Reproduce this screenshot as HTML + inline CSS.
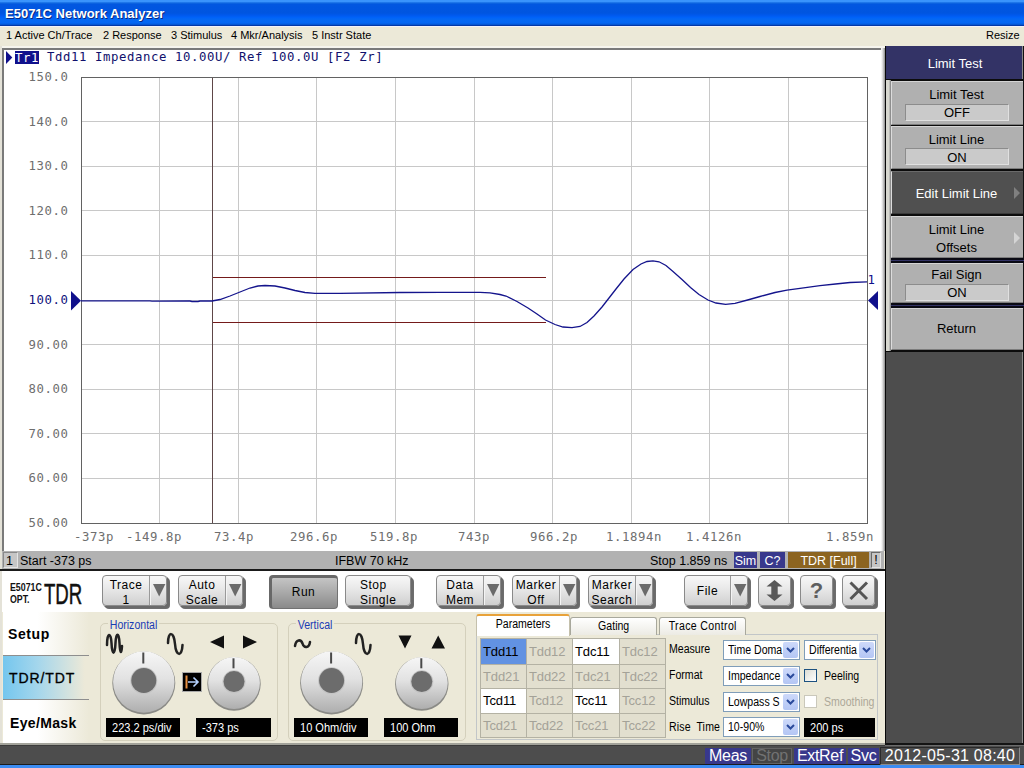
<!DOCTYPE html>
<html>
<head>
<meta charset="utf-8">
<title>E5071C Network Analyzer</title>
<style>
*{box-sizing:border-box;margin:0;padding:0}
html,body{width:1024px;height:768px;overflow:hidden;background:#ece9d8;font-family:"Liberation Sans",sans-serif;}
.abs{position:absolute}
#titlebar{left:0;top:0;width:1024px;height:27px;background:linear-gradient(#3a94fc 0px,#3a94fc 1.5px,#1068e0 3px,#0257e0 4.5px,#0055e0 13px,#0058ec 15px,#0062f8 17.5px,#0468f4 19px,#0466f2 23px,#0456d4 24.5px,#0238a8 25.5px,#0238a8 26px,#f2f2fa 26px,#f2f2fa 27px)}
#titlebar span{position:absolute;left:5px;top:6px;color:#fff;font-weight:bold;font-size:13px;text-shadow:1px 1px 0 #0a2a80;white-space:nowrap}
#menubar{left:0;top:27px;width:1024px;height:18px;background:#ece9d8;font-size:11px;color:#000}
#menubar span{position:absolute;top:2px;white-space:nowrap}
#chartframe{left:2px;top:48px;width:882px;height:503px;background:#fff;border-left:2px solid #7a7a7a;border-top:2px solid #7a7a7a}
.mono{font-family:"DejaVu Sans Mono","Liberation Mono",monospace;white-space:nowrap}
.yl{left:20px;width:48.6px;text-align:right;font-size:12.3px;letter-spacing:0.6px;color:#6e6e6e;line-height:16px}
.xl{top:529px;font-size:12.3px;letter-spacing:0.6px;color:#6e6e6e;line-height:16px}

#chstat{left:2px;top:551px;width:882px;height:18px;background:#b2b2b2;font-size:12.5px;color:#000;border-bottom:0}
#chstat span{position:absolute;top:0;line-height:20px;height:18px;white-space:nowrap}
#chstat .bx{top:1px;height:16px;line-height:18px;overflow:hidden;text-align:center;color:#fff}
#chline{left:0;top:569px;width:886px;height:2px;background:#1a1a1a}


#tb{left:2px;top:571px;width:883px;height:41px;background:#fff}
#bp{left:2px;top:612px;width:883px;height:131px;background:#ece9d8}
.ui{font-family:"Liberation Sans",sans-serif}
.btn{top:575px;height:31px;border:1px solid #8a8a8a;border-radius:4px;background:linear-gradient(#f8f8f8,#e8e8e8 45%,#cfcfcf);box-shadow:1px 1px 0 #6a6a6a,2px 2px 0 #6a6a6a,3px 3px 0 #6e6e6e;font-size:12px;color:#000;text-align:center;line-height:15px;letter-spacing:0.5px}
.btn .t{position:absolute;left:0;top:2px;white-space:nowrap}
.btn .dv{position:absolute;top:0;width:1px;height:29px;background:#9a9a9a;box-shadow:1px 0 0 #f4f4f4}
.btn svg{position:absolute;top:8px}
.pressed{height:34px;width:69px;background:linear-gradient(#c4c4c4,#a8a8a8 50%,#8a8a8a);border:1px solid #6a6a6a;border-width:3px 1px 1px 3px;border-color:#686868 #727272 #727272 #686868;box-shadow:none}

#ltab{left:3px;top:612px;width:86px;height:131px;background:linear-gradient(90deg,#fff 0%,#fff 40%,#ece9d8 100%)}
#ltabsel{left:3px;top:656px;width:86px;height:43px;background:linear-gradient(90deg,#74c6ee 0%,#a4d6ec 40%,#ece9d8 95%)}
.lt{left:9px;font-size:14px;font-weight:bold;color:#000;line-height:16px;white-space:nowrap}
.gb{border:1px solid #d4d0bc;border-radius:5px}
.gbl{top:617.5px;font-size:12px;line-height:14px;color:#1a3cb4;background:#ece9d8;padding:0 2px;white-space:nowrap;transform:scaleX(.88);transform-origin:0 50%}
.vb{top:718px;height:19px;background:#000;color:#fff;font-size:12px;line-height:21px;padding-left:6px;white-space:nowrap;overflow:hidden}
.vb .nx{transform:scaleX(.92)}
.tab{font-size:12px;text-align:center;color:#000;white-space:nowrap}
.pc{width:46px;height:24px;font-size:13px;letter-spacing:-0.1px;line-height:24px;padding-left:2px;color:#a4a298;background:#e2dfcf;white-space:nowrap}
.pc.w{background:#fff;color:#000}
.pc.s{background:#6292e2;color:#000}
.lb{left:669px;font-size:12px;line-height:14px;color:#000;white-space:nowrap}
.cb{height:20px;background:#fff;border:1px solid #7f9db9;font-size:12px;line-height:19.5px;padding-left:4px;white-space:nowrap;overflow:hidden;color:#000}
.cb i{position:absolute;right:1px;top:1px;width:15px;height:16px;background:linear-gradient(#cdd9fa,#b4c6f4);border-radius:2px}
.cb i svg{position:absolute;left:3px;top:5px}
.nx{display:inline-block;transform:scaleX(.88);transform-origin:0 50%}
.nc{display:inline-block;transform:scaleX(.88);transform-origin:50% 50%}
.ck{left:804px;width:13px;height:13px;border:1px solid #1c5180;background:linear-gradient(135deg,#dcdcd4,#fff)}
#sidebar{left:885px;top:46px;width:139px;height:697px;background:#4d4d4d;border-left:1px solid #080808;border-right:1px solid #111;box-shadow:inset -1px 0 0 #8a8a8a}
#sbhead{left:886px;top:46px;width:136px;height:33px;background:#333366;color:#fff;font-size:13px;text-align:center;line-height:35px;padding-left:2px}
#grip{left:886px;top:80px;width:5px;height:271px;background:linear-gradient(90deg,#d8d8d0 0,#d8d8d0 3px,#a0a0a0 4px,#7c7c7c 5px)}
.sb{left:891px;width:132px;background:#b0b0b0;color:#000;font-size:13px;text-align:center;border-left:1px solid #dcdcdc;border-top:1px solid #d4d4d4;border-bottom:1px solid #7c7c7c;}
.sb div{position:absolute;left:-1px;width:131px;line-height:16px;white-space:nowrap}
.sb .v{left:13px;width:104px;height:17px;background:#cacaca;border:1px solid;border-color:#8c8c8c #e0e0e0 #e0e0e0 #8c8c8c;line-height:16px}
.sep{left:891px;width:133px;height:5px;background:#333366;border-top:2px solid #0a0a14;border-bottom:2px solid #0a0a14}
#statusbar{left:0;top:743px;width:1024px;height:22px;background:#4d4d4d;border-top:2px solid #a2a29a;border-bottom:1px solid #1c1c1c;box-shadow:inset 0 1px 0 #3c3c3c}
.st{top:748px;height:16px;font-size:16px;line-height:16px;color:#fff;text-align:center;white-space:nowrap;background:#38388c;letter-spacing:-0.3px}
#bottomblue{left:0;top:765px;width:1024px;height:3px;background:#3c8cf2}
</style>
</head>
<body>
<div id="titlebar" class="abs"><span>E5071C Network Analyzer</span></div>
<div id="menubar" class="abs">
<span style="left:6px">1 Active Ch/Trace</span>
<span style="left:103px">2 Response</span>
<span style="left:171px">3 Stimulus</span>
<span style="left:231px">4 Mkr/Analysis</span>
<span style="left:312px">5 Instr State</span>
<span style="left:986px">Resize</span>
</div>
<div class="abs" style="left:0;top:46px;width:885px;height:2px;background:#f6f5ee"></div>
<div class="abs" style="left:0;top:46px;width:2px;height:697px;background:#e4e2d8"></div>
<div id="chartframe" class="abs"></div>
<svg class="abs" style="left:0;top:0" width="1024" height="768" viewBox="0 0 1024 768" shape-rendering="crispEdges">
<path d="M159.5 77.5V523.5M81.5 121.5H867.5M238.5 77.5V523.5M81.5 166.5H867.5M316.5 77.5V523.5M81.5 210.5H867.5M395.5 77.5V523.5M81.5 255.5H867.5M474.5 77.5V523.5M81.5 300.5H867.5M552.5 77.5V523.5M81.5 344.5H867.5M631.5 77.5V523.5M81.5 389.5H867.5M709.5 77.5V523.5M81.5 433.5H867.5M788.5 77.5V523.5M81.5 478.5H867.5" stroke="#c8c8c8" stroke-width="1" fill="none"/>
<rect x="81.5" y="77.5" width="786.0" height="446.0" fill="none" stroke="#626262" stroke-width="1"/>
<path d="M212.5 78V523" stroke="#5e4648" stroke-width="1" fill="none"/><path d="M213 277.5H546M213 322.5H546" stroke="#741a1a" stroke-width="1" fill="none"/>
<path d="M81 300.9 L150 300.9 L152 301.2 L190 301 L192 301.5 L198 301.5 L200 301 L212 301 L220 299.5 L230 296 L240 292 L250 288 L258 286 L265 285.5 L275 286 L285 288 L295 290.5 L305 292.5 L315 293.3 L340 293.3 L400 292.5 L440 292.4 L480 292.4 L490 292.8 L500 294.5 L506 296 L517 301.5 L528 308 L537 314 L545.5 320 L555 324.5 L563 327 L572 327.7 L580 326.5 L587 322.5 L594 316 L602 307 L609 298 L616 289 L624 279 L633 269.5 L641 264 L647 261.5 L653 260.8 L659 261.8 L666 265.5 L673 271.5 L682 279.5 L690.5 287.5 L699 294.5 L708 300 L716 303 L725.6 304.3 L735 303.3 L747.6 300 L760 296.5 L775 292.5 L787 290.2 L800 288.3 L820 285.7 L835.5 284 L850 282.5 L867 281.8" stroke="#14148c" stroke-width="1.3" fill="none" shape-rendering="auto"/>
<path d="M71 291L81 300.7L71 310.4Z" fill="#10108c" shape-rendering="auto"/>
<path d="M878 291L868 300.5L878 310Z" fill="#10108c" shape-rendering="auto"/>
<path d="M6 51L12.3 57.5L6 64Z" fill="#10108c" shape-rendering="auto"/>
</svg>
<div class="abs mono yl" style="top:69px">150.0</div>
<div class="abs mono yl" style="top:114px">140.0</div>
<div class="abs mono yl" style="top:158px">130.0</div>
<div class="abs mono yl" style="top:203px">120.0</div>
<div class="abs mono yl" style="top:247px">110.0</div>
<div class="abs mono yl" style="top:292px;color:#10107c">100.0</div>
<div class="abs mono yl" style="top:337px">90.00</div>
<div class="abs mono yl" style="top:381px">80.00</div>
<div class="abs mono yl" style="top:426px">70.00</div>
<div class="abs mono yl" style="top:470px">60.00</div>
<div class="abs mono yl" style="top:515px">50.00</div>
<div class="abs mono xl" style="left:74px">-373p</div>
<div class="abs mono xl" style="left:126px">-149.8p</div>
<div class="abs mono xl" style="left:214px">73.4p</div>
<div class="abs mono xl" style="left:290px">296.6p</div>
<div class="abs mono xl" style="left:370px">519.8p</div>
<div class="abs mono xl" style="left:458px">743p</div>
<div class="abs mono xl" style="left:530px">966.2p</div>
<div class="abs mono xl" style="left:606px">1.1894n</div>
<div class="abs mono xl" style="left:686px">1.4126n</div>
<div class="abs mono xl" style="left:826px">1.859n</div>
<div class="abs mono" style="left:15px;top:51px;width:24px;height:13px;font-size:12.3px;letter-spacing:0.6px;color:#fff;background:#10108c;line-height:14px;overflow:hidden">Tr1</div>
<div class="abs mono" style="left:47px;top:49px;font-size:12.3px;letter-spacing:0.6px;color:#10106c;line-height:16px">Tdd11 Impedance 10.00U/ Ref 100.0U [F2 Zr]</div>
<div class="abs mono" style="left:867.6px;top:272px;font-size:12.3px;letter-spacing:0.6px;color:#10108c;line-height:16px">1</div>
<div id="chstat" class="abs">
<span style="left:1px;top:1px;width:15px;height:16px;line-height:16px;padding-right:2px;background:#c6c6c6;border:1px solid;border-color:#8a8a8a #e4e4e4 #e4e4e4 #8a8a8a;text-align:center">1</span>
<span style="left:18px">Start -373 ps</span>
<span style="left:333px">IFBW 70 kHz</span>
<span style="left:648px">Stop 1.859 ns</span>
<span class="bx" style="left:732px;width:23px;background:#38388c">Sim</span>
<span class="bx" style="left:758px;width:25px;background:#38388c">C?</span>
<span class="bx" style="left:786px;width:81px;background:#8c6420">TDR [Full]</span>
<span class="bx" style="left:869px;width:10px;background:#c6c6c6;color:#000;border:1px solid;border-color:#6a6a6a #e4e4e4 #e4e4e4 #6a6a6a;line-height:15px">!</span>
</div>
<div id="chline" class="abs"></div>
<div id="sidebar" class="abs"></div>
<div class="abs" style="left:881px;top:48px;width:4px;height:503px;background:linear-gradient(90deg,#fff,#d8d8d8 45%,#8c8c8c)"></div>
<div class="abs" style="left:886px;top:79px;width:137px;height:273px;background:#0c0c0c"></div>
<div id="sbhead" class="abs">Limit Test</div>
<div id="grip" class="abs"></div>
<div class="abs sb" style="top:81px;height:44px"><div style="top:5px">Limit Test</div><div class="v" style="top:22px">OFF</div></div>
<div class="abs sb" style="top:126px;height:43px"><div style="top:5px">Limit Line</div><div class="v" style="top:21px;line-height:18px">ON</div></div>
<div class="abs sb" style="top:171px;height:43px;background:#505050;color:#fff;border-top-color:#6a6a6a;border-bottom-color:#3a3a3a"><div style="top:14px">Edit Limit Line</div><svg class="abs" style="left:122px;top:15px" width="7" height="13"><path d="M0 0L6 6L0 12Z" fill="#808080"/></svg></div>
<div class="abs sb" style="top:216px;height:42px"><div style="top:5px">Limit Line</div><div style="top:23px">Offsets</div><svg class="abs" style="left:122px;top:15px" width="7" height="13"><path d="M0 0L6 6L0 12Z" fill="#d4d4d4"/></svg></div>
<div class="abs sep" style="top:258px"></div>
<div class="abs sb" style="top:263px;height:40px;box-shadow:none"><div style="top:3px">Fail Sign</div><div class="v" style="top:20px">ON</div></div>
<div class="abs sep" style="top:303px"></div>
<div class="abs sb" style="top:308px;height:42px"><div style="top:12px">Return</div></div>
<div id="statusbar" class="abs"></div>
<div id="bottomblue" class="abs"></div>
<div class="abs" style="left:885px;top:743px;width:139px;height:3px;background:linear-gradient(#141414 0,#141414 2px,#6c6c6c 2px,#6c6c6c 3px)"></div>
<div id="tb" class="abs"></div>
<div id="bp" class="abs"></div>
<div class="abs" style="left:10px;top:581px;font-size:11px;font-weight:bold;line-height:12px;transform:scaleX(0.8);transform-origin:0 0;white-space:nowrap;color:#111">E5071C<br>OPT.</div>
<div class="abs" style="left:44px;top:577.5px;font-size:30px;line-height:32px;-webkit-text-stroke:0.5px #111;transform:scaleX(0.62);transform-origin:0 0;white-space:nowrap;color:#111">TDR</div>
<div class="abs btn" style="left:102px;width:65px"><div class="t" style="width:46px;top:2px">Trace<br>1</div><div class="dv" style="left:46px"></div><svg style="left:50px" width="14" height="14"><path d="M0 0H12.4L6.2 12.6Z" fill="#6a6a6a"/></svg></div>
<div class="abs btn" style="left:178px;width:65px"><div class="t" style="width:46px;top:2px">Auto<br>Scale</div><div class="dv" style="left:46px"></div><svg style="left:50px" width="14" height="14"><path d="M0 0H12.4L6.2 12.6Z" fill="#6a6a6a"/></svg></div>
<div class="abs btn pressed" style="left:269px;width:69px"><div class="t" style="width:63px;top:7px">Run</div></div>
<div class="abs btn " style="left:345px;width:66px"><div class="t" style="width:66px;top:2px;text-align:left;padding-left:14px">Stop<br>Single</div></div>
<div class="abs btn" style="left:436px;width:65px"><div class="t" style="width:46px;top:2px">Data<br>Mem</div><div class="dv" style="left:46px"></div><svg style="left:50px" width="14" height="14"><path d="M0 0H12.4L6.2 12.6Z" fill="#6a6a6a"/></svg></div>
<div class="abs btn" style="left:512px;width:65px"><div class="t" style="width:46px;top:2px">Marker<br>Off</div><div class="dv" style="left:46px"></div><svg style="left:50px" width="14" height="14"><path d="M0 0H12.4L6.2 12.6Z" fill="#6a6a6a"/></svg></div>
<div class="abs btn" style="left:588px;width:65px"><div class="t" style="width:46px;top:2px">Marker<br>Search</div><div class="dv" style="left:46px"></div><svg style="left:50px" width="14" height="14"><path d="M0 0H12.4L6.2 12.6Z" fill="#6a6a6a"/></svg></div>
<div class="abs btn" style="left:684px;width:64px"><div class="t" style="width:45px;top:8px">File</div><div class="dv" style="left:45px"></div><svg style="left:49px" width="14" height="14"><path d="M0 0H12.4L6.2 12.6Z" fill="#6a6a6a"/></svg></div>
<div class="abs btn" style="left:758px;width:33px"><svg style="left:7px;top:4px" width="18" height="22"><path d="M8.5 0L16.5 6.5H11.7V14.5H16.5L8.5 21L0.5 14.5H5.3V6.5H0.5Z" fill="#585858"/></svg></div>
<div class="abs btn" style="left:800px;width:33px"><div class="t" style="width:31px;top:3px;font-size:22px;font-weight:bold;line-height:24px;color:#5e5e5e;letter-spacing:0">?</div></div>
<div class="abs btn" style="left:842px;width:33px"><svg style="left:6px;top:5px" width="20" height="20"><path d="M1.5 1.5L18 18M18 1.5L1.5 18" stroke="#555" stroke-width="3" fill="none"/></svg></div>
<div id="ltab" class="abs"></div><div id="ltabsel" class="abs"></div>
<div class="abs" style="left:3px;top:655px;width:86px;height:1px;background:#8e8e8e"></div>
<div class="abs" style="left:3px;top:699px;width:86px;height:1px;background:#8e8e8e"></div>
<div class="abs lt" style="top:626px;left:8px;letter-spacing:0.6px">Setup</div>
<div class="abs lt" style="top:670px;font-weight:normal;letter-spacing:0.9px;-webkit-text-stroke:0.3px #000">TDR/TDT</div>
<div class="abs lt" style="top:715px;left:10px;letter-spacing:0.35px">Eye/Mask</div>
<div class="abs gb" style="left:100px;top:623px;width:178px;height:118px"></div>
<div class="abs gbl" style="left:108px">Horizontal</div>
<div class="abs gb" style="left:288px;top:623px;width:178px;height:118px"></div>
<div class="abs gbl" style="left:296px">Vertical</div>
<svg class="abs" style="left:0;top:612px" width="886" height="131" viewBox="0 612 886 131"><defs><linearGradient id="kg" x1="0" y1="0" x2="0" y2="1"><stop offset="0" stop-color="#f6f6f6"/><stop offset="0.45" stop-color="#e2e2e2"/><stop offset="1" stop-color="#aeaeae"/></linearGradient></defs><circle cx="143.8" cy="683" r="31.5" fill="#8a8a86"/><circle cx="143.8" cy="682" r="30.7" fill="url(#kg)"/><circle cx="143.8" cy="680.8" r="13.5" fill="#c4c4c4"/><circle cx="143.8" cy="680.5" r="12.5" fill="#6c6c6c"/><rect x="142.3" y="652.5" width="2" height="11" fill="#4a4a4a"/><circle cx="234" cy="684" r="26.7" fill="#8a8a86"/><circle cx="234" cy="683" r="25.9" fill="url(#kg)"/><circle cx="234" cy="681.8" r="11.5" fill="#c4c4c4"/><circle cx="234" cy="681.5" r="10.5" fill="#6c6c6c"/><rect x="232.5" y="658.3" width="2" height="10" fill="#4a4a4a"/><circle cx="331.6" cy="683" r="31.5" fill="#8a8a86"/><circle cx="331.6" cy="682" r="30.7" fill="url(#kg)"/><circle cx="331.6" cy="680.8" r="13.5" fill="#c4c4c4"/><circle cx="331.6" cy="680.5" r="12.5" fill="#6c6c6c"/><rect x="330.1" y="652.5" width="2" height="11" fill="#4a4a4a"/><circle cx="421.8" cy="684" r="26.7" fill="#8a8a86"/><circle cx="421.8" cy="683" r="25.9" fill="url(#kg)"/><circle cx="421.8" cy="681.8" r="11.5" fill="#c4c4c4"/><circle cx="421.8" cy="681.5" r="10.5" fill="#6c6c6c"/><rect x="420.3" y="658.3" width="2" height="10" fill="#4a4a4a"/><path d="M107 645C107 632 111 632 111.5 643C112 656 115 656 115.5 643C116 632 119 632 119.5 643C120 655 121.5 654 122 646" stroke="#222" stroke-width="2.5" fill="none" stroke-linecap="round"/><path d="M168 643C168 631 174 631 175 644C176 657 182 657 182.5 645" stroke="#222" stroke-width="2.5" fill="none" stroke-linecap="round"/><path d="M210 642L224 635.5V648.5Z M257 642L243 635.5V648.5Z" fill="#111"/><path d="M295 646C296 639 301 639 302.5 643.5C304 648.5 309 648.5 310 642" stroke="#222" stroke-width="2.5" fill="none" stroke-linecap="round"/><path d="M356 643C356 631 362 631 363 644C364 657 370 657 370.5 645" stroke="#222" stroke-width="2.5" fill="none" stroke-linecap="round"/><path d="M398.5 635.5H411.5L405 648.5Z M431.5 648.5H445L438.2 635.5Z" fill="#111"/><rect x="182.5" y="672.5" width="19" height="19" fill="#000" stroke="#a8a8a8"/><path d="M186.5 675.5V688.5" stroke="#e89040" stroke-width="2"/><path d="M188 682H197.5M193.5 677.5L198 682L193.5 686.5" stroke="#b4d0fc" stroke-width="1.6" fill="none"/></svg>
<div class="abs vb" style="left:106px;width:74px"><span class="nx">223.2 ps/div</span></div>
<div class="abs vb" style="left:196px;width:75px"><span class="nx">-373 ps</span></div>
<div class="abs vb" style="left:294px;width:74px"><span class="nx">10 Ohm/div</span></div>
<div class="abs vb" style="left:384px;width:74px"><span class="nx">100 Ohm</span></div>
<div class="abs" style="left:476px;top:634px;width:402px;height:106px;border:1px solid #c2c6c8;background:#ece9d8"></div>
<div class="abs tab" style="left:476px;top:614px;width:94px;height:22px;background:#fff;border:1px solid #c4c0ac;border-bottom:0;border-top:2px solid #e8a23a;border-radius:3px 3px 0 0;line-height:17px"><span class="nc">Parameters</span></div>
<div class="abs tab" style="left:570px;top:617px;width:87px;height:18px;background:linear-gradient(#fff,#ecebe4);border:1px solid #a8a89c;border-bottom:0;border-radius:3px 3px 0 0;line-height:17px"><span class="nc">Gating</span></div>
<div class="abs tab" style="left:659px;top:617px;width:87px;height:18px;background:linear-gradient(#fff,#ecebe4);border:1px solid #a8a89c;border-bottom:0;border-radius:3px 3px 0 0;line-height:17px"><span class="nc" style="letter-spacing:0.4px">Trace Control</span></div>
<div class="abs" style="left:480px;top:638px;width:186px;height:100px;background:#b4b2a4"></div>
<div class="abs pc s" style="left:481px;top:639px;width:45px;height:25px;line-height:25px">Tdd11</div>
<div class="abs pc" style="left:527px;top:639px;width:45px;height:25px;line-height:25px">Tdd12</div>
<div class="abs pc w" style="left:573px;top:639px;width:46px;height:25px;line-height:25px">Tdc11</div>
<div class="abs pc" style="left:620px;top:639px;width:45px;height:25px;line-height:25px">Tdc12</div>
<div class="abs pc" style="left:481px;top:665px;width:45px;height:23px;line-height:23px">Tdd21</div>
<div class="abs pc" style="left:527px;top:665px;width:45px;height:23px;line-height:23px">Tdd22</div>
<div class="abs pc" style="left:573px;top:665px;width:46px;height:23px;line-height:23px">Tdc21</div>
<div class="abs pc" style="left:620px;top:665px;width:45px;height:23px;line-height:23px">Tdc22</div>
<div class="abs pc w" style="left:481px;top:689px;width:45px;height:24px;line-height:24px">Tcd11</div>
<div class="abs pc" style="left:527px;top:689px;width:45px;height:24px;line-height:24px">Tcd12</div>
<div class="abs pc w" style="left:573px;top:689px;width:46px;height:24px;line-height:24px">Tcc11</div>
<div class="abs pc" style="left:620px;top:689px;width:45px;height:24px;line-height:24px">Tcc12</div>
<div class="abs pc" style="left:481px;top:714px;width:45px;height:23px;line-height:23px">Tcd21</div>
<div class="abs pc" style="left:527px;top:714px;width:45px;height:23px;line-height:23px">Tcd22</div>
<div class="abs pc" style="left:573px;top:714px;width:46px;height:23px;line-height:23px">Tcc21</div>
<div class="abs pc" style="left:620px;top:714px;width:45px;height:23px;line-height:23px">Tcc22</div>
<div class="abs lb" style="top:642px"><span class="nx">Measure</span></div>
<div class="abs lb" style="top:668px"><span class="nx">Format</span></div>
<div class="abs lb" style="top:694px"><span class="nx">Stimulus</span></div>
<div class="abs lb" style="top:720px"><span class="nx" style="word-spacing:3px;letter-spacing:0.2px">Rise Time</span></div>
<div class="abs cb" style="left:723px;top:640px;width:77px"><span class="nx">Time Doma</span><i><svg width="9" height="6"><path d="M1 1L4.5 4.5L8 1" stroke="#2a4a9c" stroke-width="2" fill="none"/></svg></i></div>
<div class="abs cb" style="left:723px;top:666px;width:77px"><span class="nx">Impedance</span><i><svg width="9" height="6"><path d="M1 1L4.5 4.5L8 1" stroke="#2a4a9c" stroke-width="2" fill="none"/></svg></i></div>
<div class="abs cb" style="left:723px;top:692px;width:77px"><span class="nx">Lowpass S</span><i><svg width="9" height="6"><path d="M1 1L4.5 4.5L8 1" stroke="#2a4a9c" stroke-width="2" fill="none"/></svg></i></div>
<div class="abs cb" style="left:723px;top:717px;width:77px"><span class="nx">10-90%</span><i><svg width="9" height="6"><path d="M1 1L4.5 4.5L8 1" stroke="#2a4a9c" stroke-width="2" fill="none"/></svg></i></div>
<div class="abs cb" style="left:804px;top:640px;width:72px"><span class="nx">Differentia</span><i><svg width="9" height="6"><path d="M1 1L4.5 4.5L8 1" stroke="#2a4a9c" stroke-width="2" fill="none"/></svg></i></div>
<div class="abs ck" style="top:669px"></div><div class="abs lb" style="left:824px;top:669px"><span class="nx">Peeling</span></div>
<div class="abs ck" style="top:695px;border-color:#cac8bb;background:#fff"></div><div class="abs lb" style="left:824px;top:695px;color:#aca899"><span class="nx">Smoothing</span></div>
<div class="abs vb" style="left:804px;top:718px;width:71px"><span class="nx">200 ps</span></div>
<div class="abs st" style="left:705px;width:46px">Meas</div>
<div class="abs st" style="left:752px;width:40px;background:#444;color:#727272;border:1px solid #646464;line-height:14px">Stop</div>
<div class="abs st" style="left:794px;width:52px">ExtRef</div>
<div class="abs st" style="left:848px;width:31px">Svc</div>
<div class="abs st" style="left:880px;top:747px;height:18px;width:140px;background:#4d4d4d;border:1px solid;border-color:#2a2a2a #8a8a8a #8a8a8a #2a2a2a;line-height:16px;letter-spacing:0.25px">2012-05-31 08:40</div>
</body>
</html>
